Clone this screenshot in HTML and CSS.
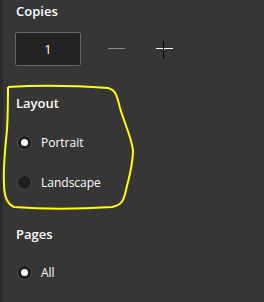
FILE: index.html
```html
<!DOCTYPE html>
<html lang="en">
<head>
  <meta charset="UTF-8">
  <title>Print options</title>
  <link rel="stylesheet" href="styles.css">
</head>
<body>
  <div class="panel">
    <h2 class="heading heading-copies">Copies</h2>
    <div class="stepper">
      <div class="count">1</div>
      <button class="step minus" aria-label="Decrease"><span class="line"></span></button>
      <button class="step plus" aria-label="Increase"><span class="line"></span><span class="bar"></span></button>
    </div>

    <h2 class="heading heading-layout">Layout</h2>
    <label class="radio">
      <span class="dot checked"></span>
      <span class="label">Portrait</span>
    </label>
    <label class="radio">
      <span class="dot"></span>
      <span class="label">Landscape</span>
    </label>

    <h2 class="heading heading-pages">Pages</h2>
    <label class="radio">
      <span class="dot checked"></span>
      <span class="label">All</span>
    </label>
  </div>

  <!-- hand drawn highlight round the layout group -->
  <svg class="scribble" width="264" height="302" viewBox="0 0 264 302">
    <path d="M8 87 C40 85 80 86 108 88 C116 90 117 96 120 108 C124 122 131 136 133 150 C133 165 129 178 126 190 C124 200 122 205 112 207 C80 209 40 209 14 207 C7 204 4 196 4 184 C3 168 5 150 7 130 C8 112 8 98 8 87"/>
  </svg>
</body>
</html>
```

FILE: styles.css
```css
body {
  margin: 0;
  width: 264px;
  height: 302px;
  background-color: #2b2b2b;
  font-family: 'Open Sans', sans-serif;
  color: #fff;
  overflow: hidden;
}

.panel {
  margin-left: 3px;
  height: 302px;
  padding-left: 13px;
  background-color: #363636;
  display: flex;
  flex-direction: column;
  align-items: flex-start;
}

.heading {
  margin: 0;
  height: 20px;
  line-height: 20px;
  font-size: 13px;
  font-weight: 600;
}

.heading-copies {
  margin-top: 1px;
}

.heading-layout {
  margin-top: 27px;
  margin-bottom: 19px;
}

.heading-pages {
  margin-top: 12px;
  margin-bottom: 18px;
}

.stepper {
  margin-top: 11px;
  display: flex;
  align-items: center;
  margin-left: -1px;
}

.count {
  width: 64px;
  height: 32px;
  border: 1px solid #666;
  border-radius: 2px;
  background-color: #232323;
  text-align: center;
  line-height: 32px;
  font-size: 13px;
}

.step {
  position: relative;
  width: 48px;
  height: 34px;
  padding: 0;
  border: none;
  background: none;
}

.minus {
  margin-left: 11px;
}

.step .line {
  position: absolute;
  left: 16px;
  top: 16px;
  width: 17px;
  height: 1px;
  background-color: #8a8a8a;
}

.plus .line {
  background-color: #fff;
}

.plus .bar {
  position: absolute;
  left: 23px;
  top: 9px;
  width: 1px;
  height: 17px;
  background-color: #000;
}

.radio {
  height: 20px;
  display: flex;
  align-items: center;
  margin-bottom: 20px;
  margin-left: 1px;
}

.dot {
  box-sizing: border-box;
  width: 15px;
  height: 15px;
  border-radius: 50%;
  border: 1px solid #4a4a4a;
  background-color: #1e1e1e;
  display: flex;
  align-items: center;
  justify-content: center;
}

.dot.checked::after {
  content: '';
  width: 7px;
  height: 7px;
  border-radius: 50%;
  background-color: #fff;
}

.label {
  margin-left: 9px;
  font-size: 12px;
}

.scribble {
  position: absolute;
  left: 0;
  top: 0;
}

.scribble path {
  fill: none;
  stroke: #ffff00;
  stroke-width: 2;
}
```
